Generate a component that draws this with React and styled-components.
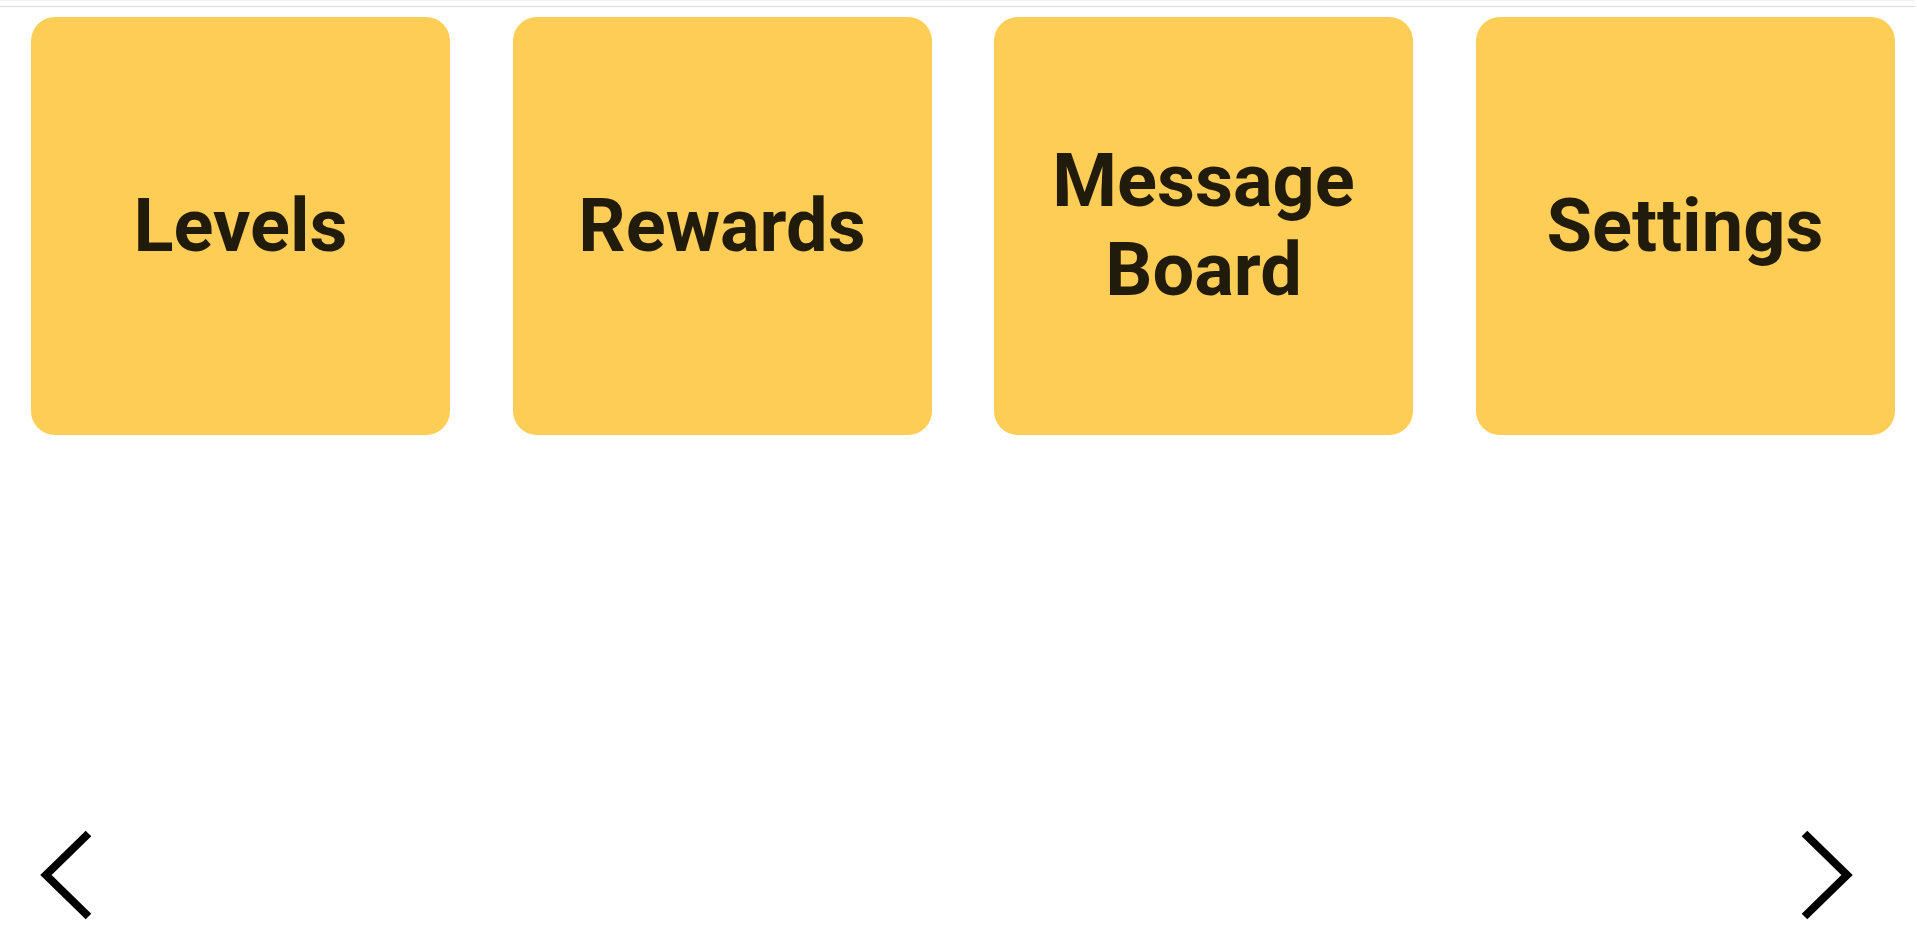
import React from "react";
import styled, { createGlobalStyle } from "styled-components";

const GlobalStyle = createGlobalStyle`
  html, body {
    margin: 0;
    padding: 0;
    background: #ffffff;
    font-family: Roboto, "Noto Sans", sans-serif;
  }
`;

const Page = styled.div`
  height: 100vh;
  display: flex;
  flex-direction: column;
  overflow: hidden;
`;

const TopBar = styled.div`
  height: 7px;
  border-top: 1px solid #f3f3f3;
  border-bottom: 1px solid #dcdcdc;
  box-sizing: border-box;
  margin: 0 2px 0 0;
`;

const Track = styled.div`
  display: flex;
  gap: 62.5px;
  padding: 10px 0 0 31px;
`;

const Tile = styled.div`
  flex: 0 0 419px;
  height: 418px;
  border-radius: 24px;
  background: #fecd56;
  display: flex;
  align-items: center;
  justify-content: center;
  padding: 0 40px;
  box-sizing: border-box;
  cursor: pointer;
`;

const Label = styled.span`
  font-family: Roboto, "Noto Sans", sans-serif;
  font-weight: 700;
  font-size: 74px;
  line-height: 1.2;
  color: rgba(0, 0, 0, 0.87);
  text-align: center;
`;

const Nav = styled.div`
  margin-top: auto;
  display: flex;
  justify-content: space-between;
  align-items: center;
  padding: 0 59px 12px 35px;
`;

const Arrow = styled.button`
  border: none;
  background: none;
  padding: 0;
  width: 60px;
  height: 96px;
  cursor: pointer;
  display: block;
`;

const Chevron = ({ dir }) => (
  <svg width="60" height="96" viewBox="0 0 60 96">
    <path
      d={
        dir === "left"
          ? "M53.5 6.5 L11 48 L53.5 89.5"
          : "M6.5 6.5 L49 48 L6.5 89.5"
      }
      fill="none"
      stroke="#000"
      strokeWidth="8"
      strokeLinecap="butt"
      strokeLinejoin="miter"
    />
  </svg>
);

const items = ["Levels", "Rewards", "Message Board", "Settings"];

export default function App() {
  return (
    <>
      <GlobalStyle />
      <Page>
        <TopBar />
        <Track>
          {items.map((name) => (
            <Tile key={name}>
              <Label>{name}</Label>
            </Tile>
          ))}
        </Track>
        <Nav>
          <Arrow aria-label="previous">
            <Chevron dir="left" />
          </Arrow>
          <Arrow aria-label="next">
            <Chevron dir="right" />
          </Arrow>
        </Nav>
      </Page>
    </>
  );
}
